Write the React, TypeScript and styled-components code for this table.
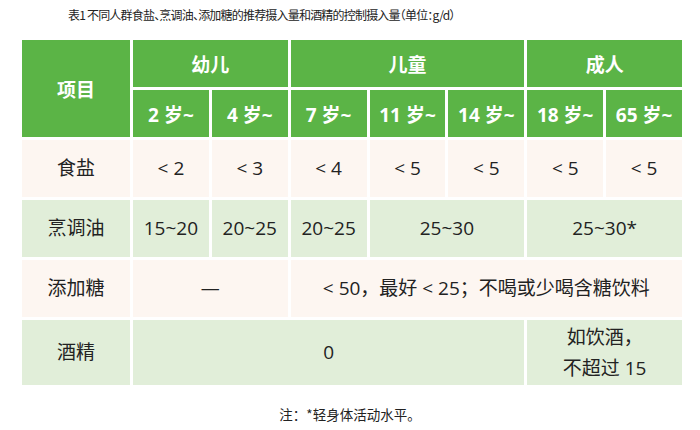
import React from 'react'
import styled, { createGlobalStyle } from 'styled-components'

const GlobalStyle = createGlobalStyle`
  body {
    margin: 0;
    background: #ffffff;
    font-family: 'Open Sans', 'Noto Sans CJK SC', sans-serif;
    color: #222;
  }
`

type Cell = {
  text: React.ReactNode
  span?: number
}

type Row = {
  label: string
  tone: 'peach' | 'green'
  cells: Array<Cell>
}

const rows: Array<Row> = [
  {
    label: '食盐',
    tone: 'peach',
    cells: ['< 2', '< 3', '< 4', '< 5', '< 5', '< 5', '< 5'].map((t) => ({
      text: t,
    })),
  },
  {
    label: '烹调油',
    tone: 'green',
    cells: [
      { text: '15~20' },
      { text: '20~25' },
      { text: '20~25' },
      { text: '25~30', span: 2 },
      { text: '25~30*', span: 2 },
    ],
  },
  {
    label: '添加糖',
    tone: 'peach',
    cells: [
      { text: '—', span: 2 },
      { text: '< 50，最好 < 25；不喝或少喝含糖饮料', span: 5 },
    ],
  },
  {
    label: '酒精',
    tone: 'green',
    cells: [
      { text: '0', span: 5 },
      {
        text: (
          <>
            如饮酒，
            <br />
            不超过 15
          </>
        ),
        span: 2,
      },
    ],
  },
]

const ages = ['2 岁~', '4 岁~', '7 岁~', '11 岁~', '14 岁~', '18 岁~', '65 岁~']

const App: React.FC = () => {
  return (
    <Page>
      <GlobalStyle />
      <Caption>
        表1 不同人群食盐、烹调油、添加糖的推荐摄入量和酒精的控制摄入量（单位：g/d）
      </Caption>
      <Table>
        <HeadCell $rows={2}>项目</HeadCell>
        <HeadCell $span={2}>幼儿</HeadCell>
        <HeadCell $span={3}>儿童</HeadCell>
        <HeadCell $span={2}>成人</HeadCell>
        {ages.map((a) => (
          <HeadCell key={a}>{a}</HeadCell>
        ))}
        {rows.map((row) => (
          <React.Fragment key={row.label}>
            <BodyCell $tone={row.tone}>{row.label}</BodyCell>
            {row.cells.map((c, i) => (
              <BodyCell key={i} $tone={row.tone} $span={c.span}>
                {c.text}
              </BodyCell>
            ))}
          </React.Fragment>
        ))}
      </Table>
      <Note>注：*轻身体活动水平。</Note>
    </Page>
  )
}

export default App

const Page = styled.div`
  width: 700px;
  height: 430px;
  box-sizing: border-box;
  padding-top: 6px;
`

const Caption = styled.div`
  padding-left: 68px;
  font-size: 12px;
  line-height: 18px;
  letter-spacing: -0.8px;
  color: #222;
  font-family: 'Noto Sans CJK SC', sans-serif;
  font-feature-settings: 'halt';
  white-space: nowrap;
`

const Table = styled.div`
  display: grid;
  grid-template-columns: 108px repeat(7, 1fr);
  grid-template-rows: 47px 47px 57px 57px 57px 65px;
  gap: 3px;
  width: 660px;
  margin: 16px 0 0 22px;
`

const HeadCell = styled.div<{ $span?: number; $rows?: number }>`
  grid-column: span ${(p) => p.$span ?? 1};
  grid-row: span ${(p) => p.$rows ?? 1};
  background: #5bb446;
  color: #ffffff;
  font-weight: 700;
  font-size: 19px;
  display: flex;
  align-items: center;
  justify-content: center;
  white-space: nowrap;
`

const BodyCell = styled.div<{ $tone: 'peach' | 'green'; $span?: number }>`
  grid-column: span ${(p) => p.$span ?? 1};
  background: ${(p) => (p.$tone === 'peach' ? '#fdf6f1' : '#e1eed9')};
  font-size: 19px;
  line-height: 31px;
  display: flex;
  align-items: center;
  justify-content: center;
  text-align: center;
  white-space: nowrap;
  color: #222;
`

const Note = styled.div`
  margin-top: 19px;
  text-align: center;
  font-size: 13.5px;
  font-family: 'Noto Sans CJK SC', sans-serif;
  color: #222;
`
